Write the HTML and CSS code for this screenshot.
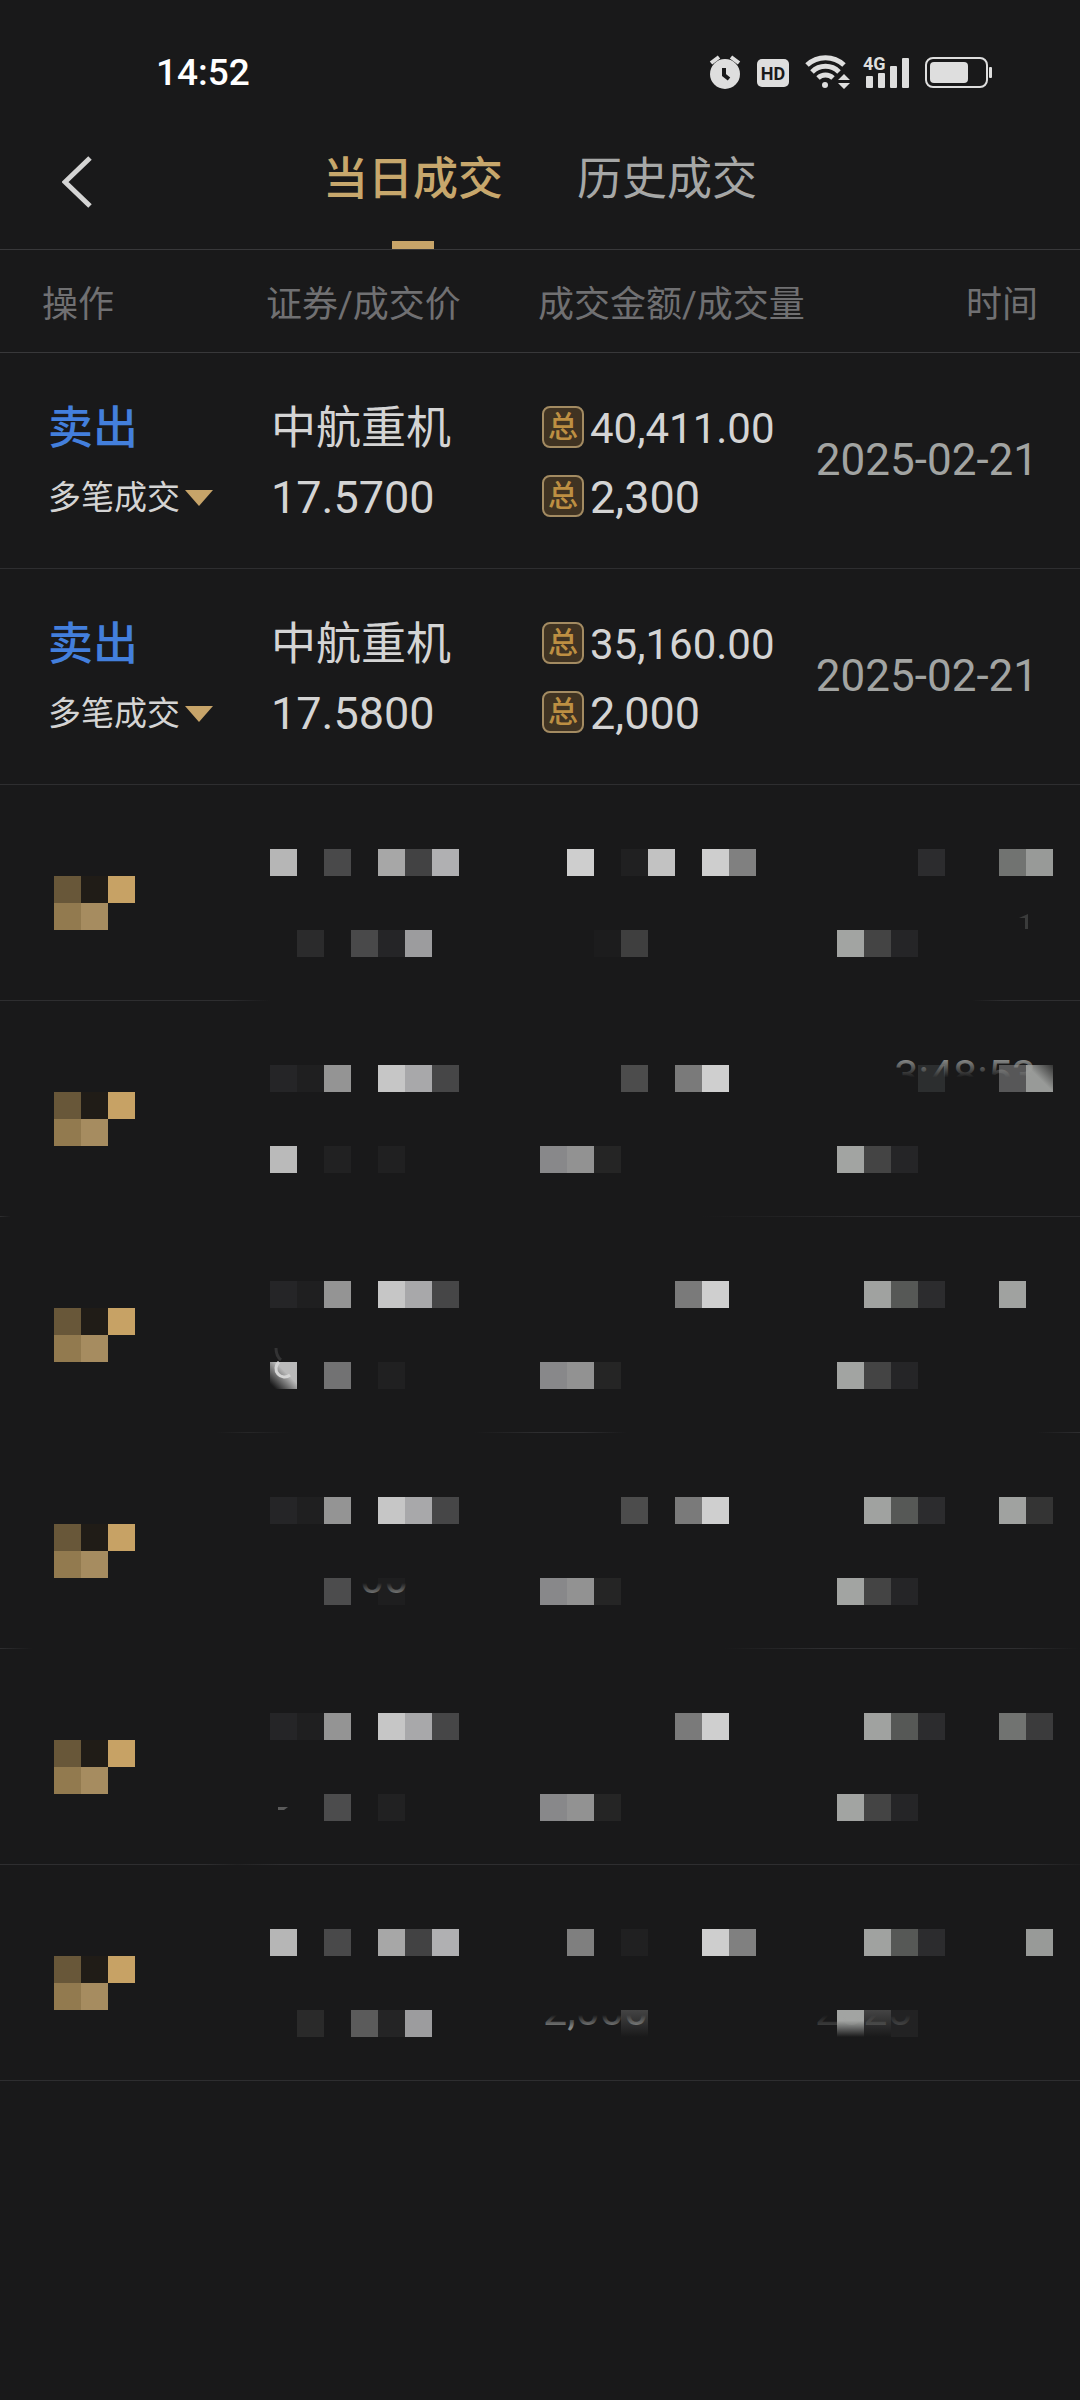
FILE: index.html
```html
<!DOCTYPE html>
<html lang="zh-CN">
<head>
  <meta charset="UTF-8">
  <meta name="viewport" content="width=device-width, initial-scale=1">
  <title>当日成交</title>
  <link rel="stylesheet" href="styles.css">
</head>
<body>
  <div class="status-bar">
    <span class="clock">14:52</span>
    <div class="status-icons">
      <svg width="32" height="34" viewBox="0 0 32 34">
        <circle cx="16" cy="19" r="15"/>
        <path class="line" d="M2 8l8-6M30 8l-8-6"/>
        <path class="cut" d="M15 13v7l5 4"/>
      </svg>
      <svg width="32" height="34" viewBox="0 0 32 34">
        <rect y="4" width="32" height="28" rx="5"/>
        <text class="cut-text" x="16" y="25" text-anchor="middle">HD</text>
      </svg>
      <svg width="44" height="34" viewBox="0 0 44 34">
        <path class="arc" d="M2 10a27 27 0 0 1 37 0M7 17a19 19 0 0 1 27 0M13 23a11 11 0 0 1 15 0"/>
        <circle cx="20" cy="30" r="3"/>
        <path d="M33 25l6-6 6 6zM33 28l6 6 6-6z"/>
      </svg>
      <svg width="44" height="34" viewBox="0 0 44 34">
        <text x="-2" y="15">4G</text>
        <rect x="1" y="21" width="7" height="12" rx="1"/>
        <rect x="13" y="18" width="7" height="15" rx="1"/>
        <rect x="25" y="11" width="7" height="22" rx="1"/>
        <rect x="37" y="3" width="7" height="30" rx="1"/>
      </svg>
      <svg width="67" height="34" viewBox="0 0 67 34">
        <rect class="shell" x="1" y="3" width="61" height="29" rx="7"/>
        <rect x="5" y="7" width="38" height="21" rx="4"/>
        <rect x="64" y="12" width="3" height="11" rx="1"/>
      </svg>
    </div>
  </div>

  <header class="nav">
    <button class="back" aria-label="返回">
      <svg width="30" height="52" viewBox="0 0 30 52"><path d="M28 2L3 26l25 24"/></svg>
    </button>
    <nav class="tabs">
      <a class="tab active" href="#today">当日成交</a>
      <a class="tab" href="#history">历史成交</a>
    </nav>
  </header>

  <table class="trades">
    <thead>
      <tr>
        <th class="col-op">操作</th>
        <th class="col-name">证券/成交价</th>
        <th class="col-amount">成交金额/成交量</th>
        <th class="col-time">时间</th>
      </tr>
    </thead>
    <tbody id="trades">
      <tr>
        <td class="op">
          <div class="side">卖出</div>
          <button class="more">多笔成交<span class="arrow"></span></button>
        </td>
        <td class="name">
          <div>中航重机</div>
          <div>17.5700</div>
        </td>
        <td class="amount">
          <div class="total money"><span class="badge">总</span>40,411.00</div>
          <div class="total"><span class="badge">总</span>2,300</div>
        </td>
        <td class="time">2025-02-21</td>
      </tr>
      <tr>
        <td class="op">
          <div class="side">卖出</div>
          <button class="more">多笔成交<span class="arrow"></span></button>
        </td>
        <td class="name">
          <div>中航重机</div>
          <div>17.5800</div>
        </td>
        <td class="amount">
          <div class="total money"><span class="badge">总</span>35,160.00</div>
          <div class="total"><span class="badge">总</span>2,000</div>
        </td>
        <td class="time">2025-02-21</td>
      </tr>
    </tbody>
  </table>

  <svg class="defs" width="0" height="0">
    <linearGradient id="fade-down" x1="0" y1="0" x2="0" y2="1">
      <stop offset="0.2" stop-color="#a0a2a0" stop-opacity="0.8"/>
      <stop offset="0.55" stop-color="#a0a2a0" stop-opacity="0"/>
    </linearGradient>
    <linearGradient id="fade-up" x1="0" y1="0" x2="0" y2="1">
      <stop offset="0.6" stop-color="#a0a2a0" stop-opacity="0"/>
      <stop offset="0.85" stop-color="#a0a2a0" stop-opacity="0.8"/>
    </linearGradient>
    <linearGradient id="fade-light" x1="0" y1="0" x2="0" y2="1">
      <stop offset="0" stop-color="#a2a4a2"/>
      <stop offset="0.4" stop-color="#a2a4a2"/>
      <stop offset="1" stop-color="#19191a"/>
    </linearGradient>
    <linearGradient id="fade-dark" x1="0" y1="0" x2="0" y2="1">
      <stop offset="0" stop-color="#444444"/>
      <stop offset="1" stop-color="#19191a"/>
    </linearGradient>
    <linearGradient id="fade-corner" x1="0" y1="1" x2="1" y2="0">
      <stop offset="0.1" stop-color="#19191a"/>
      <stop offset="0.6" stop-color="#bababa"/>
    </linearGradient>
    <linearGradient id="fade-right" x1="0" y1="1" x2="1" y2="0">
      <stop offset="0.5" stop-color="#989a98"/>
      <stop offset="1" stop-color="#343434"/>
    </linearGradient>
  </svg>

  <script>
    const SIZE = 27;
    const tbody = document.querySelector('#trades');

    // one string per line of blocks, "-" leaves a block empty
    const op = ['', '#685739 #201c17 #c7a265', '#927a4f #a68c60'];
    const nameA = '#b6b6b6 - #49494a - #a7a7a7 #424243 #b0b0b2';
    const nameB = '#252527 #1f1f20 #949494 - #c6c6c6 #a8a8aa #464647';
    const amountB = '- - - - - #7a7a7a #cfcfcf';
    const amountC = '- - - #4c4c4c - #7a7a7a #cfcfcf';
    const volume = '#88888a #929292 #252525';
    const time = '- #a0a2a0 #565856 #2c2c2e';
    const date = '#a2a4a2 #444444 #252527';

    const masked = [
      {
        name: [nameA, '', '', '- #2b2b2c - #49494a #252527 #9c9c9e'],
        amount: ['- #cecece - #202021 #c2c2c2 - #cecece #808080', '', '', '- - #1c1c1d #3f3f3f'],
        time: ['- - - #2c2c2e - - #717371 #989a98', '', '', date],
        timeExtra: '<path d="M182 69l9-4v15h-3V69z" fill="#3a3b3b"/>'
      },
      {
        name: [nameB, '', '', '#bababa - #212122 - #202021'],
        amount: [amountC, '', '', volume],
        time: ['- - - #2c2e2f - - #575758 url(#fade-right)', '', '', date],
        timeExtra: '<text x="199" y="25" text-anchor="end" fill="url(#fade-down)">3:48:53</text>'
      },
      {
        name: [nameB, '', '', 'url(#fade-corner) - #727273 - #202021'],
        nameExtra: '<path d="M6 67q0 8 5 12" fill="none" stroke="#333334" stroke-width="3"/><path d="M9 81a8 8 0 0 0 11 13" fill="none" stroke="#d4d4d4" stroke-width="3"/>',
        amount: [amountB, '', '', volume],
        time: [time + ' - - #a0a2a0', '', '', date]
      },
      {
        name: [nameB, '', '', '- - #4c4c4d - #1e1e1f'],
        nameExtra: '<text x="90" y="96" fill="url(#fade-up)">00</text>',
        amount: [amountC, '', '', volume],
        time: [time + ' - - #a0a2a0 #343434', '', '', date]
      },
      {
        name: [nameB, '', '', '- - #4c4c4d - #212122'],
        nameExtra: '<path d="M8 94h10l-4 3H8z" fill="#5a5a5a"/>',
        amount: [amountB, '', '', volume],
        time: [time + ' - - #717371 #3b3b3c', '', '', date]
      },
      {
        name: [nameA, '', '', '- #2a2a2a - #5b5b5b #242425 #9c9c9e'],
        amount: ['- #7f7f7f - #202021 - - #cecece #808080', '', '', '- - - url(#fade-dark)'],
        amountExtra: '<text x="3" y="96" fill="url(#fade-up)">2,000</text>',
        time: [time + ' - - - #989a98', '', '', 'url(#fade-light) url(#fade-dark) #222223'],
        timeExtra: '<text x="-22" y="96" fill="url(#fade-up)" opacity="0.4">2025</text>'
      }
    ];

    function mosaic(lines, extra = '') {
      let rects = '';
      lines.forEach((line, y) => {
        line.split(' ').forEach((color, x) => {
          if(!color || color === '-') return;
          rects += `<rect x="${x * SIZE}" y="${y * SIZE}" width="${SIZE}" height="${SIZE}" fill="${color}"/>`;
        });
      });
      return `<svg class="mosaic" width="216" height="108" viewBox="0 0 216 108">${rects}${extra}</svg>`;
    }

    masked.forEach((row, i) => {
      const tr = document.createElement('tr');
      tr.className = `masked masked-${i + 1}`;
      tr.innerHTML = `
        <td class="op">${mosaic(op)}</td>
        <td class="name">${mosaic(row.name, row.nameExtra)}</td>
        <td class="amount">${mosaic(row.amount, row.amountExtra)}</td>
        <td class="time">${mosaic(row.time, row.timeExtra)}</td>`;
      tbody.appendChild(tr);
    });
  </script>
</body>
</html>
```
FILE: styles.css
```css
* {
  box-sizing: border-box;
}

body {
  margin: 0;
  min-height: 100vh;
  background: #19191a;
  color: #d4d4d4;
  font-family: Roboto, "Noto Sans CJK SC", sans-serif;
}

button {
  padding: 0;
  border: 0;
  background: none;
  color: inherit;
  font: inherit;
}

svg {
  display: block;
}

/* status bar */
.status-bar {
  display: flex;
  align-items: center;
  justify-content: space-between;
  height: 114px;
  padding: 30px 88px 0 156px;
}

.clock {
  color: #fff;
  font-size: 37px;
  font-weight: 500;
}

.status-icons {
  display: flex;
  gap: 16px;
  fill: #dedede;
}

.status-icons svg {
  overflow: visible;
}

.status-icons text {
  font-size: 18px;
  font-weight: 700;
}

.status-icons .cut-text {
  fill: #19191a;
}

.line,
.arc,
.cut,
.shell {
  fill: none;
  stroke: #dedede;
  stroke-width: 4;
}

.cut {
  stroke: #19191a;
}

.arc {
  stroke-width: 5;
}

.shell {
  stroke-width: 2;
}

/* top nav */
.nav {
  position: relative;
  display: flex;
  justify-content: center;
  height: 136px;
  border-bottom: 1px solid #38383a;
}

.back {
  position: absolute;
  top: 42px;
  left: 62px;
}

.back path {
  fill: none;
  stroke: #d4d4d4;
  stroke-width: 5;
}

.tabs {
  display: flex;
  gap: 74px;
}

.tab {
  display: flex;
  flex-direction: column;
  align-items: center;
  justify-content: space-between;
  padding-top: 34px;
  color: #a6a7a6;
  font-size: 45px;
  line-height: 64px;
  text-decoration: none;
}

.active {
  color: #c7a76c;
  font-weight: 500;
}

.active::after {
  content: "";
  width: 42px;
  height: 8px;
  background: #c7a469;
}

/* trades */
.trades {
  width: 100%;
  table-layout: fixed;
  border-spacing: 0;
}

th {
  height: 103px;
  padding: 0;
  border-bottom: 1px solid #38383a;
  color: #707072;
  font-size: 36px;
  font-weight: 400;
  text-align: left;
  white-space: nowrap;
}

.col-op {
  width: 266px;
  padding-left: 42px;
}

.col-name,
.col-amount {
  width: 272px;
}

.col-time {
  padding-right: 42px;
  text-align: right;
}

td {
  height: 216px;
  padding: 5px 0 0;
  border-bottom: 1px solid #2e2e30;
  font-size: 45px;
  line-height: 69px;
  white-space: nowrap;
}

.op {
  padding-left: 48px;
}

.name {
  padding-left: 5px;
}

.amount {
  padding-left: 4px;
}

.time {
  padding-top: 0;
  padding-right: 42px;
  color: #a2a4a2;
  font-size: 44px;
  text-align: right;
}

.side {
  color: #437fdc;
  font-weight: 500;
}

.more {
  display: flex;
  align-items: center;
  gap: 5px;
  font-size: 33px;
  line-height: 69px;
}

.arrow {
  border: 14px solid transparent;
  border-top: 16px solid #c7a469;
  border-bottom: 0;
}

.total {
  display: flex;
  align-items: center;
  gap: 6px;
}

.money {
  font-size: 42px;
}

.badge {
  width: 42px;
  height: 42px;
  margin-bottom: 4px;
  border: 2px solid #a38b62;
  border-radius: 8px;
  background: #403322;
  color: #bd8f42;
  font-size: 30px;
  font-weight: 500;
  line-height: 38px;
  text-align: center;
}

/* masked rows */
.masked td {
  padding-top: 64px;
  border-bottom: 0;
  vertical-align: top;
}

.masked .op {
  padding-left: 54px;
}

.masked .name {
  padding-left: 4px;
}

.masked .amount {
  padding-left: 2px;
}

.masked .time {
  padding-right: 0;
  padding-left: 27px;
}

.mosaic {
  overflow: visible;
}

.mosaic text {
  font-size: 43px;
}

/* the line under a masked row is rubbed out in places */
.masked {
  background: linear-gradient(#2e2e30, #2e2e30) bottom / 100% 1px no-repeat;
}

.masked-1 {
  background-image: linear-gradient(90deg, #2e2e30 21%, transparent 25%, transparent 90%, #2e2e30 93%);
}

.masked-2 {
  background-image: linear-gradient(90deg, #2e2e30, transparent 1%, transparent 65%, #2a2a2c 80%);
}

.masked-3 {
  background-image: linear-gradient(90deg, transparent 20%, #262627 23%, transparent 27%, transparent 44%, #2e2e30 50%, #2e2e30 54%, transparent 58%, transparent 96%, #2e2e30);
}

.masked-4 {
  background-image: linear-gradient(90deg, #2e2e30, transparent 3%, transparent 67%, #2e2e30 76%, #2e2e30 94%, transparent);
}

.masked-5 {
  background-image: linear-gradient(90deg, #2e2e30 19%, #222223 22%, #2e2e30 26%, #2e2e30 95%, #1e1e1f);
}

.defs {
  position: absolute;
}
```
